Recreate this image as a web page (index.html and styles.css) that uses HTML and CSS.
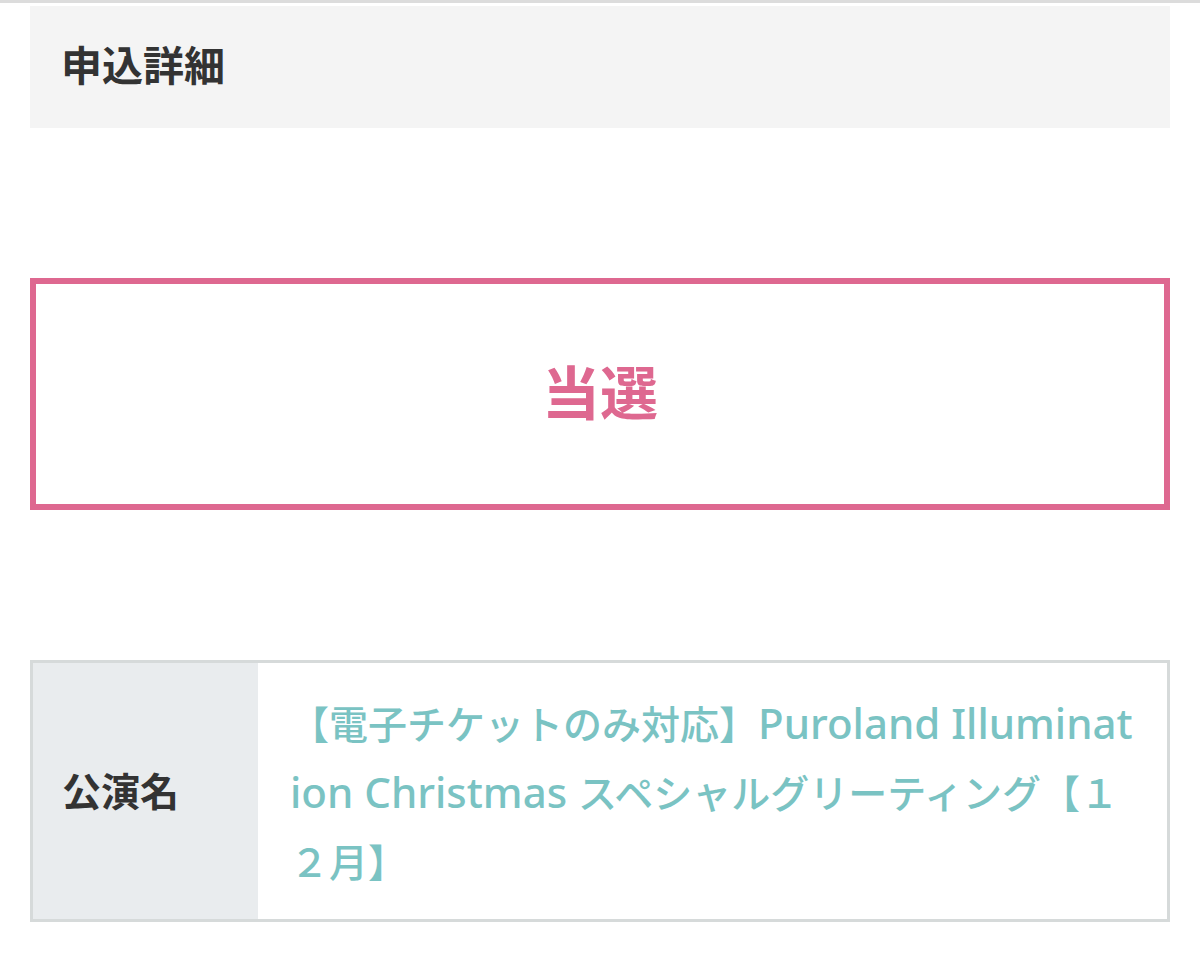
FILE: index.html
```html
<!DOCTYPE html>
<html lang="ja">
<head>
<meta charset="utf-8">
<title>申込詳細</title>
<link rel="stylesheet" href="styles.css">
</head>
<body>
<div class="topbar"></div>
<main class="page">
  <header class="section-head">
    <h1 class="section-title">申込詳細</h1>
  </header>
  <div class="result">
    <span class="result-text">当選</span>
  </div>
  <div class="detail">
    <div class="detail-label">公演名</div>
    <div class="detail-value">
      <span class="line">【電子チケットのみ対応】<span class="latin">Puroland Illuminat</span></span>
      <span class="line"><span class="latin">ion Christmas </span>スペシャルグリーティング【１</span>
      <span class="line">２月】</span>
    </div>
  </div>
</main>
</body>
</html>
```

FILE: styles.css
```css
html, body {
  margin: 0;
  padding: 0;
  background: #ffffff;
}

body {
  font-family: "Noto Sans CJK JP", "Noto Sans", sans-serif;
  color: #333333;
}

.topbar {
  height: 3px;
  background: #dcdcdc;
}

.page {
  padding: 3px 30px 0;
  display: flex;
  flex-direction: column;
}

.section-head {
  background: #f4f4f4;
  height: 122px;
  box-sizing: border-box;
  display: flex;
  align-items: center;
  padding: 0 31px 7px;
}

.section-title {
  margin: 0;
  font-size: 41px;
  font-weight: 700;
  line-height: 1;
  color: #333333;
}

.result {
  margin-top: 150px;
  height: 232px;
  box-sizing: border-box;
  border: 6px solid #de6890;
  padding-bottom: 8px;
  display: flex;
  align-items: center;
  justify-content: center;
}

.result-text {
  font-size: 58px;
  font-weight: 700;
  line-height: 1;
  color: #de6890;
}

.detail {
  margin-top: 150px;
  border: 3px solid #d6dada;
  display: grid;
  grid-template-columns: 225px 1fr;
}

.detail-label {
  background: #e9ecee;
  display: flex;
  align-items: center;
  padding: 0 0 5px 29px;
  font-size: 39px;
  font-weight: 700;
  color: #333333;
}

.detail-value {
  padding: 25px 30px 25px 32px;
  font-family: "Noto Sans CJK JP", sans-serif;
  font-size: 39px;
  font-weight: 500;
  line-height: 68px;
  color: #7ac3c3;
}

.line {
  display: block;
  white-space: nowrap;
}

.latin {
  font-family: "Noto Sans", "Noto Sans CJK JP", sans-serif;
  font-size: 42px;
  font-weight: 500;
}
```
